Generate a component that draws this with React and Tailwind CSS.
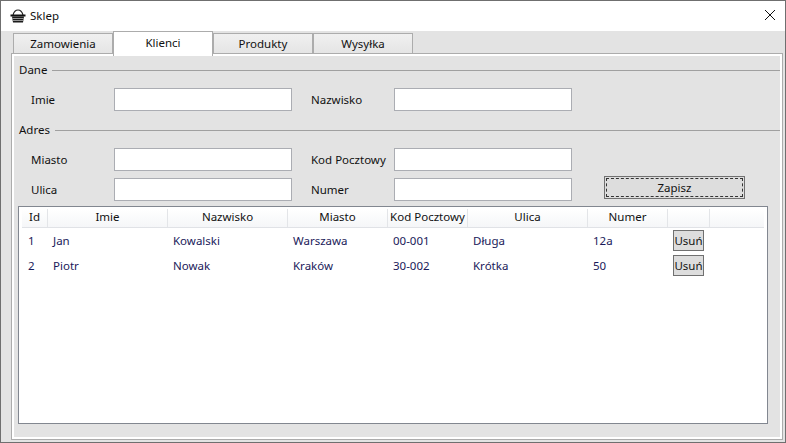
const font = { fontFamily: '"Noto Sans", "Open Sans", sans-serif' };

const columns = [
  { title: "Id", cls: "w-[26px]" },
  { title: "Imie", cls: "w-[120px]" },
  { title: "Nazwisko", cls: "w-[120px]" },
  { title: "Miasto", cls: "w-[100px]" },
  { title: "Kod Pocztowy", cls: "w-[80px]" },
  { title: "Ulica", cls: "w-[120px]" },
  { title: "Numer", cls: "w-[80px]" },
  { title: "", cls: "w-[42px]" },
];

const rows = [
  ["1", "Jan", "Kowalski", "Warszawa", "00-001", "Długa", "12a"],
  ["2", "Piotr", "Nowak", "Kraków", "30-002", "Krótka", "50"],
];

function BasketIcon() {
  return (
    <svg className="w-[16px] h-[16px] shrink-0" viewBox="0 0 16 16" fill="none">
      <path d="M3 7C4 3.5 6 2 8 2s4 1.5 5 5" stroke="#222" strokeWidth="1.2" />
      <path d="M0.5 6.5h15v2h-15z" fill="#111" />
      <path d="M2 8.5h12l-1 6H3z" fill="#1a1a1a" />
      <path d="M2.5 10.5h11M3 12.5h10" stroke="#ccc" strokeWidth="0.7" />
    </svg>
  );
}

function Tab({ label, active }) {
  if (active) {
    return (
      <div className="relative z-10 w-[100px] h-[25px] -mt-[2px] bg-white border border-b-0 border-[#acacac] flex items-center justify-center pb-[3px]">
        {label}
      </div>
    );
  }
  return (
    <div className="w-[100px] h-[21px] bg-gradient-to-b from-[#f0f0f0] to-[#e5e5e5] border border-[#acacac] flex items-center justify-center">
      {label}
    </div>
  );
}

function Heading({ label }) {
  return (
    <div className="flex items-center h-[16px] pl-[5px]">
      <span className="mr-[5px]">{label}</span>
      <div className="flex-1 h-px bg-[#a0a0a0]" />
    </div>
  );
}

function Field({ label }) {
  return (
    <div className="flex items-center">
      <span className="w-[83px] whitespace-nowrap">{label}</span>
      <div className="w-[178px] h-[23px] bg-white border border-[#abadb3]" />
    </div>
  );
}

function FieldRow({ left, right }) {
  return (
    <div className="flex gap-[19px] pl-[17px]">
      <Field label={left} />
      <Field label={right} />
    </div>
  );
}

export default function App() {
  return (
    <div style={font} className="w-[786px] h-[443px] flex flex-col bg-[#e3e3e3] border border-[#6f6f6f] text-[11.5px] leading-[16px] text-[#111] overflow-hidden">
      <div className="h-[30px] shrink-0 bg-white flex items-center pl-[9px] pr-[9px]">
        <BasketIcon />
        <span className="ml-[4px]">Sklep</span>
        <svg className="ml-auto -mt-[2px] w-[12px] h-[12px]" viewBox="0 0 12 12" fill="none">
          <path d="M1 1l10 10M11 1L1 11" stroke="#111" strokeWidth="1" />
        </svg>
      </div>

      <div className="flex h-[22px] pl-[12px] mt-[2px] shrink-0 items-start">
        <Tab label="Zamowienia" />
        <Tab label="Klienci" active />
        <Tab label="Produkty" />
        <Tab label="Wysyłka" />
      </div>

      <div className="ml-[10px] mr-[2px] mb-[2px] -mt-[2px] flex-1 border border-[#acacac]">
        <div className="h-full border-2 border-white pt-[6px] pb-[13px] flex flex-col">
          <Heading label="Dane" />
          <div className="mt-[10px]">
            <FieldRow left="Imie" right="Nazwisko" />
          </div>
          <div className="mt-[11px]">
            <Heading label="Adres" />
          </div>
          <div className="mt-[10px]">
            <FieldRow left="Miasto" right="Kod Pocztowy" />
          </div>
          <div className="flex mt-[7px] items-start">
            <FieldRow left="Ulica" right="Numer" />
            <button className="ml-[32px] -mt-[2px] w-[141px] h-[23px] bg-[#dddddd] border border-[#707070] p-px">
              <span className="h-full flex items-center justify-center border border-dashed border-[#333]">Zapisz</span>
            </button>
          </div>

          <div className="ml-[4px] mr-[12px] mt-[5px] flex-1 bg-white border border-[#828790] pt-[2px] px-[3px] text-[#1a1a5a]">
            <div className="flex h-[19px] border-b border-[#e0e2e6] bg-gradient-to-b from-white to-[#f5f6f8] text-[#111]">
              {columns.map((c) => (
                <div key={c.title} className={`${c.cls} shrink-0 border-r border-[#e3e5e8] text-center whitespace-nowrap`}>
                  {c.title}
                </div>
              ))}
            </div>
            {rows.map((row) => (
              <div key={row[0]} className="flex h-[25px] items-center">
                {row.map((cell, i) => (
                  <div key={i} className={`${columns[i].cls} shrink-0 ${i === 0 ? "pl-[6px]" : "pl-[5px]"}`}>
                    {cell}
                  </div>
                ))}
                <button className="ml-[5px] w-[31px] h-[21px] bg-[#dddddd] border border-[#707070] text-[#111] flex items-center justify-center">
                  Usuń
                </button>
              </div>
            ))}
          </div>
        </div>
      </div>
    </div>
  );
}
